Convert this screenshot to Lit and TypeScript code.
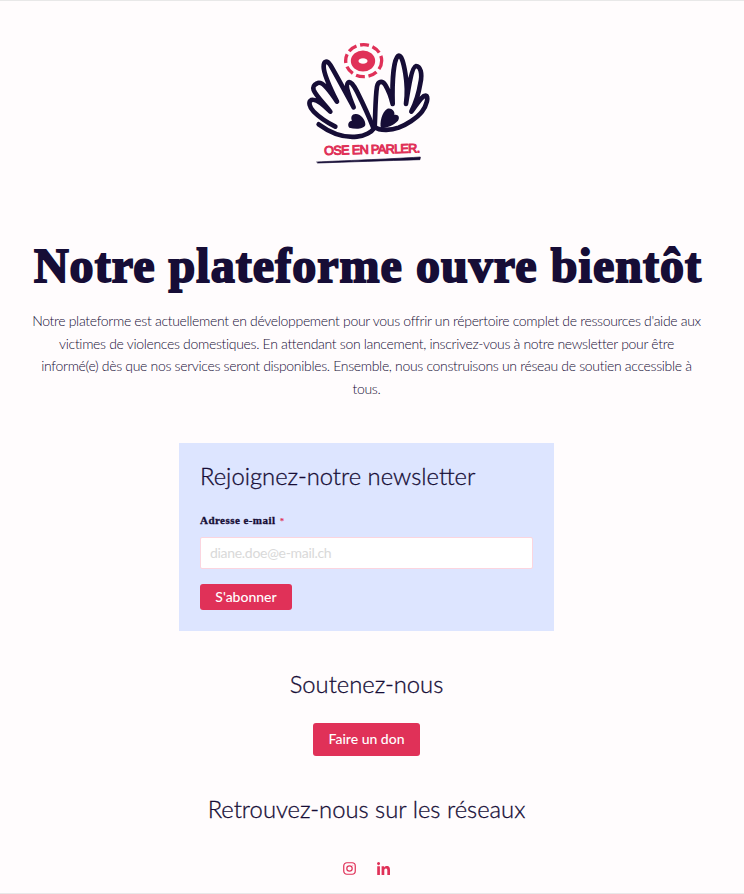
import { LitElement, html, css, svg } from "lit";
import { customElement } from "lit/decorators.js";

@customElement("app-root")
export class AppRoot extends LitElement {
  static styles = css`
    :host { display: block; }
    .page {
      box-sizing: border-box; height: 894px; overflow: hidden; background: #fffcfd;
      border-top: 1px solid #e8e8e8; border-bottom: 1px solid #e8e8e8; padding-right: 11px;
      display: flex; flex-direction: column; align-items: center;
      color: #160d36; font-family: "Lato", sans-serif;
    }
    .logo { display: block; margin-top: 29px; width: 150px; height: 140px; }
    h1 {
      margin: 66px 0 0 3px; font: 700 48px/60px "Liberation Serif", serif; white-space: nowrap;
      -webkit-text-stroke: 1.9px #160d36; letter-spacing: 1.05px;
    }
    .intro {
      margin: 14px 0 0; width: 674px; text-align: center; font-size: 14px; font-weight: 300;
      line-height: 22.7px; letter-spacing: -.32px; color: #160d36;
    }
    .card {
      box-sizing: border-box; width: 375px; height: 188px; margin-top: 42px; background: #dde5ff;
      padding: 15px 21px 0;
    }
    h2 { margin: 0; font: 300 23.8px/36px "Lato", sans-serif; -webkit-text-stroke: .3px #160d36; }
    .card h2 { text-align: left; }
    label {
      display: block; margin-top: 19px; font: 700 11px/14px "Liberation Serif", serif;
      -webkit-text-stroke: .3px #160d36; letter-spacing: .45px;
    }
    label span { color: #e03158; -webkit-text-stroke: 0; font-size: 9px; margin-left: 1px; }
    .field {
      box-sizing: border-box; margin-top: 9px; height: 32px; background: #fff;
      border: 1px solid #fbd5df; border-radius: 2px; padding: 0 9px;
      font-size: 14px; line-height: 30px; letter-spacing: -.3px; color: #d9d9d9;
    }
    .btn {
      background: #e03158; color: #fff; border-radius: 3px; font-weight: 500; text-align: center;
    }
    .sub { margin-top: 15px; width: 92px; height: 26px; font-size: 14px; line-height: 25px; }
    .sec { text-align: center; }
    .s1 { margin-top: 35px; }
    .don { margin-top: 21px; width: 107px; height: 33px; font-size: 14px; line-height: 32px; }
    .s2 { margin-top: 35px; }
    .social { display: flex; gap: 21px; margin-top: 35px; align-items: center; }
    .social svg { display: block; height: 13px; }
    .ig { width: 13px; }
    .in { width: 13px; }
    .slogan { font: 400 38px "Liberation Sans Narrow", "Liberation Sans", sans-serif; }
  `;

  logo() {
    const navy = "#160d36";
    const red = "#e03158";
    return svg`
      <svg class="logo" viewBox="0 0 450 420" fill="none" stroke-linecap="round" stroke-linejoin="round">
        <ellipse cx="213" cy="93" rx="25" ry="20" stroke=${red} stroke-width="23"/>
        <ellipse cx="215" cy="92" rx="54" ry="48" stroke=${red} stroke-width="10" stroke-dasharray="27 11" stroke-linecap="butt"/>
        <g stroke=${navy} stroke-width="14">
          <path d="M245 296 C235 270 215 225 195 185 C185 165 175 152 168 158 C160 165 170 195 185 232 C165 195 130 130 115 105 C105 90 95 92 95 110 C95 130 115 175 135 215 C115 185 90 150 75 160 C65 165 62 170 65 180 C70 195 95 220 115 245 C95 225 70 205 58 210 C48 215 52 232 65 245 C85 265 110 280 130 290"/>
          <path d="M80 283 C110 305 150 325 195 320 C220 318 240 305 245 296"/>
          <path d="M248 290 C250 260 250 200 255 170 C258 155 270 150 280 165 C292 185 298 205 302 222 C300 150 305 90 318 78 C328 72 335 100 340 130 C345 160 345 200 342 222 C350 170 360 110 372 108 C385 108 392 130 385 160 C380 190 368 225 358 245 C380 215 392 195 402 197 C410 200 405 225 390 245 C375 265 340 285 320 293 C300 300 265 305 248 290"/>
        </g>
        <path d="M190 252 C205 250 222 270 220 285 C215 298 190 298 172 293 C165 285 170 272 180 272 C175 262 180 252 190 252 Z" fill=${navy}/>
        <path d="M285 237 C297 232 310 243 307 255 C318 252 325 262 318 272 C305 285 285 295 267 294 C262 280 270 245 285 237 Z" fill=${navy}/>
        <text class="slogan" x="97" y="375" fill=${red} stroke=${red} stroke-width="3" textLength="288" lengthAdjust="spacing" transform="rotate(-1.5 97 375)">OSE EN PARLER.</text>
        <path d="M75 396 C150 392 280 388 385 381 L384 389 C280 392 170 396 78 399 Z" fill=${navy} stroke=${navy} stroke-width="2"/>
      </svg>`;
  }

  render() {
    return html`
      <div class="page">
        ${this.logo()}
        <h1>Notre plateforme ouvre bientôt</h1>
        <p class="intro">Notre plateforme est actuellement en développement pour vous offrir un répertoire complet de ressources d'aide aux victimes de violences domestiques. En attendant son lancement, inscrivez-vous à notre newsletter pour être informé(e) dès que nos services seront disponibles. Ensemble, nous construisons un réseau de soutien accessible à tous.</p>
        <div class="card">
          <h2>Rejoignez-notre newsletter</h2>
          <label>Adresse e-mail <span>*</span></label>
          <div class="field">diane.doe@e-mail.ch</div>
          <div class="btn sub">S'abonner</div>
        </div>
        <h2 class="sec s1">Soutenez-nous</h2>
        <div class="btn don">Faire un don</div>
        <h2 class="sec s2">Retrouvez-nous sur les réseaux</h2>
        <div class="social">
          <svg class="ig" viewBox="0 0 14 14" fill="none" stroke="#e03158" stroke-width="1.3">
            <rect x=".8" y=".8" width="12.4" height="12.4" rx="3.4"/>
            <circle cx="7" cy="7" r="2.9"/>
            <circle cx="10.6" cy="3.4" r=".5" fill="#e03158" stroke="none"/>
          </svg>
          <svg class="in" viewBox="0 0 448 448" fill="#e03158">
            <path d="M100.28 448H7.4V148.9h92.88zM53.79 108.1C24.09 108.1 0 83.5 0 53.8a53.79 53.79 0 0 1 107.58 0c0 29.7-24.1 54.3-53.79 54.3zM447.9 448h-92.68V302.4c0-34.7-.7-79.2-48.29-79.2-48.29 0-55.69 37.7-55.69 76.7V448h-92.78V148.9h89.08v40.8h1.3c12.4-23.5 42.69-48.3 87.88-48.3 94 0 111.28 61.9 111.28 142.3V448z"/>
          </svg>
        </div>
      </div>`;
  }
}
